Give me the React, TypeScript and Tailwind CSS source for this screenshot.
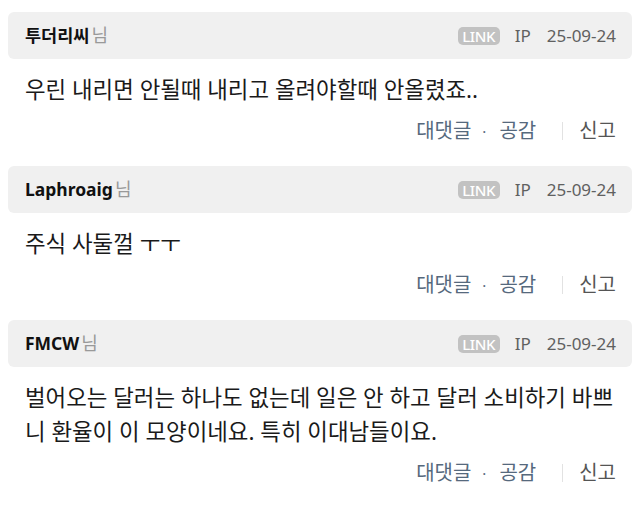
import React from "react";

type C = { name: string; lines: string[] };

const comments: C[] = [
  { name: "투더리씨", lines: ["우린 내리면 안될때 내리고 올려야할때 안올렸죠.."] },
  { name: "Laphroaig", lines: ["주식 사둘껄 ㅜㅜ"] },
  {
    name: "FMCW",
    lines: [
      "벌어오는 달러는 하나도 없는데 일은 안 하고 달러 소비하기 바쁘",
      "니 환율이 이 모양이네요. 특히 이대남들이요.",
    ],
  },
];

function Comment({ c }: { c: C }) {
  return (
    <div className="flex flex-col">
      <div className="mx-2 h-[47px] rounded-[6px] bg-[#f0f0f0] flex items-center pl-[17px] pr-4">
        <div className="flex items-baseline">
          <span className="text-[17.5px] font-bold text-[#111]">{c.name}</span>
          <span className="ml-[2px] text-[18px] text-[#999]">님</span>
        </div>
        <div className="ml-auto flex items-center">
          <span className="h-[18px] w-[42px] rounded-[5px] bg-[#c2c2c2] text-white text-[15px] font-medium leading-[18px] flex items-center justify-center tracking-[-0.4px]">
            LINK
          </span>
          <span className="ml-[15px] text-[17px] text-[#606060]">IP</span>
          <span className="ml-[16px] text-[17px] text-[#606060]">25-09-24</span>
        </div>
      </div>
      <div className="mt-[14px] pl-[25px] pr-[20px] text-[22.4px] leading-[34px] text-[#1a1a1a]">
        {c.lines.map((l, i) => (
          <div key={i} className="whitespace-nowrap">{l}</div>
        ))}
      </div>
      <div className="mt-[12px] h-[24px] flex items-center justify-end pr-[24px] text-[20px] leading-[24px]">
        <span className="text-[#56697d]">대댓글</span>
        <span className="ml-[11px] text-[#56697d] text-[15px]">·</span>
        <span className="ml-[13px] text-[#56697d]">공감</span>
        <span className="ml-[26px] w-px h-[18px] bg-[#e2e2e2]"></span>
        <span className="ml-[16px] text-[#555]">신고</span>
      </div>
    </div>
  );
}

export default function App() {
  return (
    <div
      className="w-[640px] h-[507px] bg-white pt-[12px] overflow-hidden flex flex-col gap-[23px]"
      style={{ fontFamily: '"Noto Sans", "Noto Sans CJK KR", sans-serif' }}
    >
      {comments.map((c, i) => (
        <Comment key={i} c={c} />
      ))}
    </div>
  );
}
